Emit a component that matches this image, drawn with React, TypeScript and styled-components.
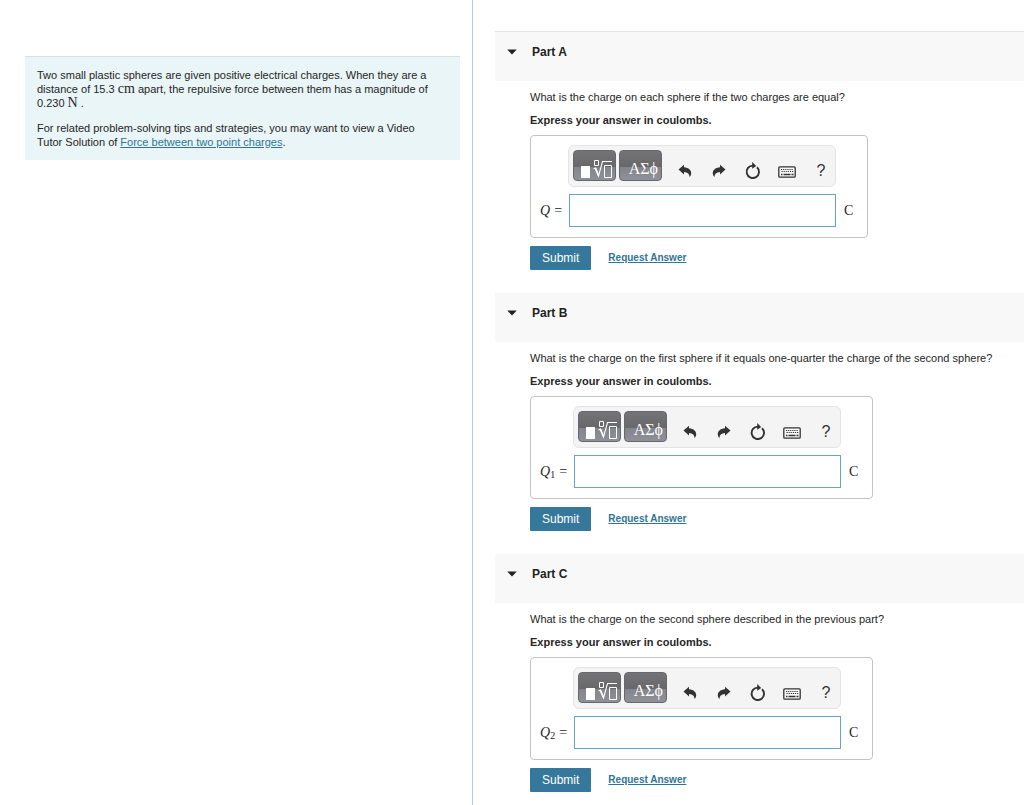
import React, { useId } from "react";
import styled, { createGlobalStyle } from "styled-components";

const GlobalStyle = createGlobalStyle`
  *, *::before, *::after { box-sizing: border-box; }
  body {
    margin: 0;
    background: #ffffff;
    color: #262626;
    font-family: "Liberation Sans", Arial, sans-serif;
    font-size: 11px;
    line-height: 14px;
  }
  p { margin: 0; }
  button, input { font-family: inherit; }
`;

const Page = styled.div`
  display: grid;
  grid-template-columns: minmax(0, 473fr) minmax(0, 551fr);
  min-height: 100vh;
`;

const IntroColumn = styled.aside`
  padding: 56px 12px 12px 25px;
  border-right: 1px solid #b9cddb;
`;

const IntroCard = styled.section`
  display: flex;
  flex-direction: column;
  gap: 11px;
  padding: 11px 20px 11px 12px;
  background: #e9f5f7;
  border-top: 1px solid #d9e0e3;
`;

const MathText = styled.span`
  font-family: "Liberation Serif", "Times New Roman", serif;
  font-size: 14px;
  line-height: 14px;
`;

const TextLink = styled.a`
  color: #2f7599;
  text-decoration: underline;
`;

const ActionLink = styled(TextLink)`
  font-size: 10px;
  font-weight: 700;
`;

const PartsColumn = styled.main`
  display: flex;
  flex-direction: column;
  gap: 23px;
  padding: 31px 0 12px 22px;
`;

const PartSection = styled.section`
  &:first-child { border-top: 1px solid #e6e6e6; }
`;

const PartHeader = styled.header`
  display: flex;
  align-items: flex-start;
  height: 49px;
  padding: 12px;
  background: #f8f8f8;
`;

const Toggle = styled.button`
  display: flex;
  align-items: center;
  gap: 15px;
  padding: 0;
  border: 0;
  background: none;
  color: #222222;
  font-size: 12px;
  font-weight: 700;
  line-height: 16px;
`;

const PartBody = styled.div`
  display: flex;
  flex-direction: column;
  align-items: flex-start;
  padding: 8px 0 0 35px;
`;

const Question = styled.p`
  line-height: 16px;
  margin-bottom: 7px;
`;

const Instruction = styled.p`
  font-weight: 700;
  line-height: 16px;
  margin-bottom: 7px;
`;

const AnswerBox = styled.div`
  display: grid;
  grid-template-columns: auto 267px auto;
  align-items: center;
  row-gap: 7px;
  padding: 9px 14px 10px 9px;
  border: 1px solid #c4c4c4;
  border-radius: 4px;
`;

const Toolbar = styled.div`
  grid-column: 2;
  grid-row: 1;
  display: flex;
  align-items: flex-start;
  height: 42px;
  padding: 4px;
  margin-left: -1px;
  border: 1px solid #e4e4e4;
  border-radius: 6px;
  background: #f4f4f4;
`;

const PaletteButton = styled.button`
  display: flex;
  flex-shrink: 0;
  align-items: flex-end;
  justify-content: flex-end;
  width: 43px;
  height: 31px;
  margin-right: 3px;
  padding: 0 3px 1px 0;
  border: 1px solid #68686c;
  border-radius: 4px;
  background: linear-gradient(#747476 0%, #68686a 55%, #84848c 56%, #909099 100%);
  color: #ffffff;
  font-family: "Liberation Serif", serif;
  font-size: 16px;
  line-height: 20px;
`;

const ToolButton = styled.button`
  display: flex;
  align-items: center;
  justify-content: center;
  width: 34px;
  height: 32px;
  padding: 10px 0 0;
  border: 0;
  background: none;
  color: #333333;
  font-size: 16px;
  line-height: 20px;
`;

const ToolGroup = styled.div`
  display: flex;
  flex-shrink: 0;
  margin-left: 3px;
`;

const AnswerLabel = styled.label`
  grid-column: 1;
  grid-row: 2;
  display: flex;
  align-items: baseline;
  gap: 4px;
  padding-right: 7px;
  font-family: "Liberation Serif", "Times New Roman", serif;
  font-size: 14px;
  line-height: 20px;

  sub {
    font-size: 10px;
    line-height: 10px;
    vertical-align: -2px;
  }
`;

const AnswerInput = styled.input`
  grid-column: 2;
  grid-row: 2;
  width: 100%;
  height: 33px;
  padding: 0 8px;
  border: 1px solid #6ba3c2;
  border-radius: 0;
  background: #ffffff;
  font-size: 14px;
`;

const Unit = styled.span`
  grid-column: 3;
  grid-row: 2;
  padding-left: 8px;
  font-family: "Liberation Serif", "Times New Roman", serif;
  font-size: 14px;
  line-height: 20px;
`;

const Actions = styled.div`
  display: flex;
  align-items: center;
  gap: 17px;
  margin-top: 8px;
`;

const SubmitButton = styled.button`
  height: 24px;
  padding: 0 12px;
  border: 0;
  border-radius: 1px;
  background: #35789b;
  color: #ffffff;
  font-size: 12px;
  line-height: 16px;
`;

const Caret = () => (
  <svg width="10" height="6" viewBox="0 0 10 6" aria-hidden="true">
    <path d="M.3.5h9.4L5 5.6z" fill="currentColor" />
  </svg>
);

const RootIcon = () => (
  <svg width="34" height="20" viewBox="0 0 34 20" aria-hidden="true">
    <path d="M3 7h9v12H3z" fill="#fff" />
    <g fill="none" stroke="#fff">
      <path d="M16.5 1.5h4v5h-4z" />
      <path d="M15.5 10l2-1 3 8L24.500 2.500H34" strokeWidth="1.100" />
      <path d="M17.500 9.500l3 7" strokeWidth="1.800" />
      <path d="M26.500 6.500h7v12h-7z" />
    </g>
  </svg>
);

const UndoIcon = () => (
  <svg width="14" height="14" viewBox="0 0 14 14" aria-hidden="true">
    <path d="M.5 5.500L6 .8v2.400c5 .4 7.400 3.200 7.200 6.300-.1 1.600-.7 2.700-1.700 3.500C11.600 9.900 9.800 8.200 6 8v2.500z" fill="currentColor" />
  </svg>
);

const RedoIcon = () => (
  <svg width="14" height="14" viewBox="0 0 14 14" aria-hidden="true">
    <path d="M13.500 5.500L8 .8v2.400C3 3.600.6 6.400.8 9.500c.1 1.600.7 2.700 1.700 3.500C2.400 9.900 4.200 8.200 8 8v2.500z" fill="currentColor" />
  </svg>
);

const ResetIcon = () => (
  <svg width="16" height="18" viewBox="0 0 16 18" aria-hidden="true">
    <path d="M12 5.200A6.200 6.200 0 1 1 8 3.600" fill="none" stroke="currentColor" strokeWidth="1.900" />
    <path d="M7.200 0l4 3.900-4 2.900z" fill="currentColor" />
  </svg>
);

const KeyboardIcon = () => (
  <svg width="18" height="14" viewBox="0 -2 18 14" aria-hidden="true">
    <rect x=".8" y=".8" width="16.400" height="10.400" rx="1" fill="#f8f8f8" stroke="currentColor" strokeWidth="1.300" />
    <path d="M3 3.500h12.500M3.500 5.500h12" stroke="currentColor" strokeWidth="1.200" strokeDasharray="1.200 .9" />
    <path d="M3 8.500h1.500M5.500 8.500h7M13.500 8.500h2" stroke="currentColor" strokeWidth="1.400" />
  </svg>
);

interface PartData {
  name: string;
  question: string;
  index?: string;
}

const parts: PartData[] = [
  { name: "Part A", question: "What is the charge on each sphere if the two charges are equal?" },
  {
    name: "Part B",
    question: "What is the charge on the first sphere if it equals one-quarter the charge of the second sphere?",
    index: "1",
  },
  {
    name: "Part C",
    question: "What is the charge on the second sphere described in the previous part?",
    index: "2",
  },
];

const Part = ({ name, question, index }: PartData) => {
  const inputId = useId();
  return (
    <PartSection>
      <PartHeader>
        <Toggle type="button" aria-expanded="true">
          <Caret />
          {name}
        </Toggle>
      </PartHeader>
      <PartBody>
        <Question>{question}</Question>
        <Instruction>Express your answer in coulombs.</Instruction>
        <AnswerBox>
          <Toolbar role="toolbar">
            <PaletteButton type="button" aria-label="Templates">
              <RootIcon />
            </PaletteButton>
            <PaletteButton type="button">ΑΣϕ</PaletteButton>
            <ToolGroup>
              <ToolButton type="button" aria-label="Undo"><UndoIcon /></ToolButton>
              <ToolButton type="button" aria-label="Redo"><RedoIcon /></ToolButton>
              <ToolButton type="button" aria-label="Reset"><ResetIcon /></ToolButton>
              <ToolButton type="button" aria-label="Keyboard shortcuts"><KeyboardIcon /></ToolButton>
              <ToolButton type="button">?</ToolButton>
            </ToolGroup>
          </Toolbar>
          <AnswerLabel htmlFor={inputId}>
            <span>
              <i>Q</i>
              {index && <sub>{index}</sub>}
            </span>
            <span>=</span>
          </AnswerLabel>
          <AnswerInput id={inputId} type="text" />
          <Unit>C</Unit>
        </AnswerBox>
        <Actions>
          <SubmitButton type="submit">Submit</SubmitButton>
          <ActionLink href="#">Request Answer</ActionLink>
        </Actions>
      </PartBody>
    </PartSection>
  );
};

export default function App() {
  return (
    <>
      <GlobalStyle />
      <Page>
        <IntroColumn>
          <IntroCard>
            <p>
              Two small plastic spheres are given positive electrical charges. When they are a
              distance of 15.3 <MathText>cm</MathText> apart, the repulsive force between them has a
              magnitude of 0.230 <MathText>N</MathText> .
            </p>
            <p>
              For related problem-solving tips and strategies, you may want to view a Video Tutor
              Solution of <TextLink href="#">Force between two point charges</TextLink>.
            </p>
          </IntroCard>
        </IntroColumn>
        <PartsColumn>
          {parts.map((part) => (
            <Part key={part.name} {...part} />
          ))}
        </PartsColumn>
      </Page>
    </>
  );
}
